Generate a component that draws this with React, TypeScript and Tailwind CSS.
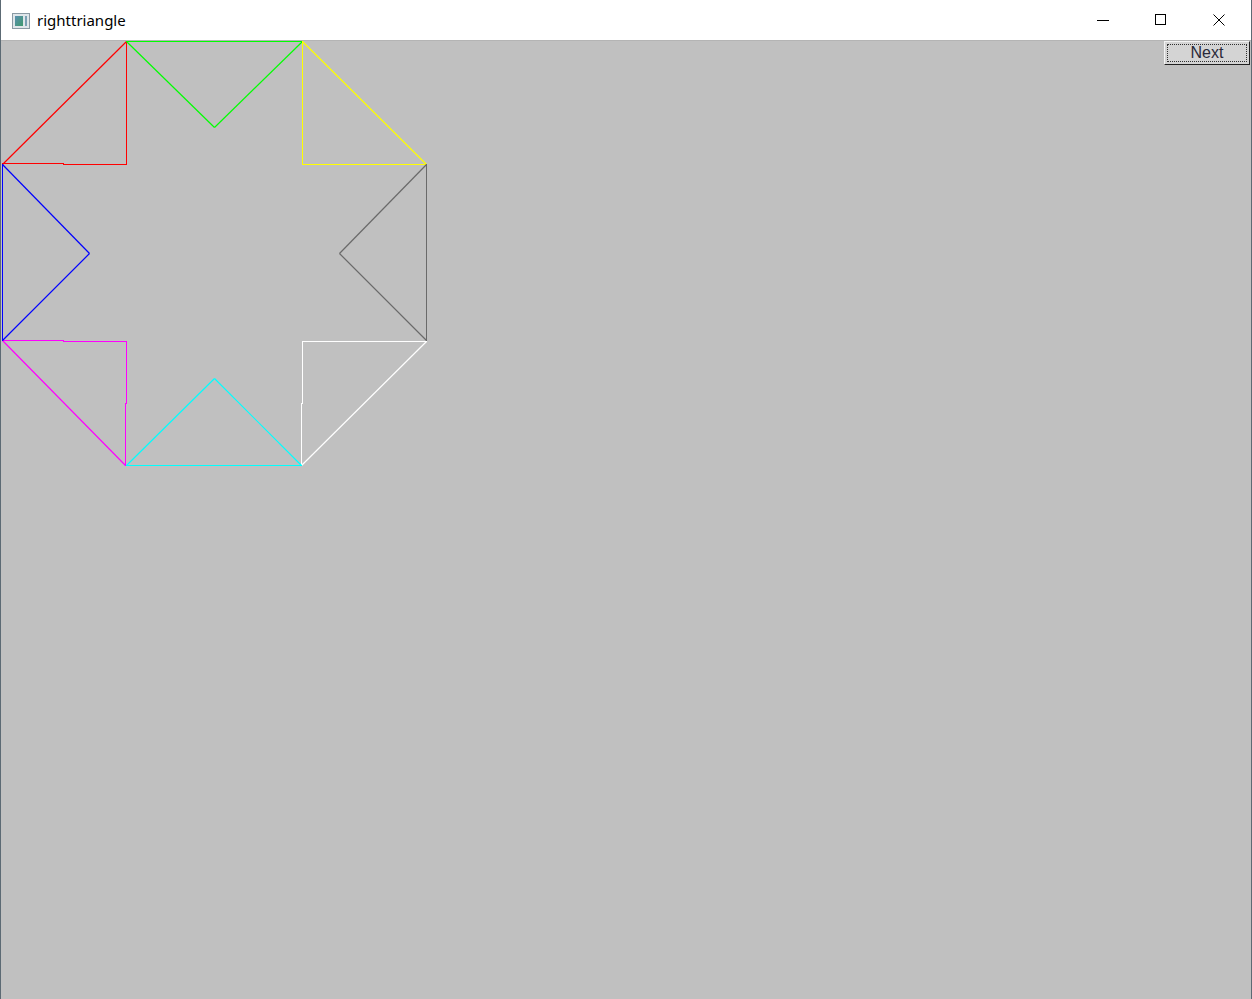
import React from 'react';

// the eight right triangles, page pixel coords: [x1, y1, x2, y2]
const shapes: { color: string; segs: number[][] }[] = [
  { color: '#ff0000', segs: [[126, 41, 2, 164], [126, 41, 126, 164], [2, 163, 63, 163], [63, 164, 126, 164]] },
  { color: '#00ff00', segs: [[126, 41, 302, 41], [126, 41, 214, 127], [214, 127, 302, 41]] },
  { color: '#ffff00', segs: [[302, 41, 302, 164], [302, 164, 426, 164], [302, 41, 426, 164]] },
  { color: '#6a6a6a', segs: [[426, 164, 426, 340], [426, 164, 339, 253], [339, 253, 426, 340]] },
  { color: '#ffffff', segs: [[302, 341, 426, 341], [302, 341, 302, 403], [301, 403, 301, 465], [426, 341, 301, 465]] },
  { color: '#00ffff', segs: [[126, 465, 301, 465], [126, 465, 214, 378], [214, 378, 301, 465]] },
  { color: '#ff00ff', segs: [[2, 340, 63, 340], [63, 341, 126, 341], [126, 341, 126, 403], [125, 403, 125, 465], [2, 340, 125, 465]] },
  { color: '#0000ff', segs: [[2, 164, 2, 340], [2, 164, 89, 253], [89, 253, 2, 340]] },
];

const Seg = ({ s, color }: { s: number[]; color: string }) => {
  const [x1, y1, x2, y2] = s;
  if (x1 === x2 || y1 === y2) {
    // straight runs as 1px rects so they stay sharp
    return (
      <rect
        x={Math.min(x1, x2)}
        y={Math.min(y1, y2)}
        width={Math.abs(x2 - x1) + 1}
        height={Math.abs(y2 - y1) + 1}
        fill={color}
      />
    );
  }
  return (
    <path d={`M${x1 + 0.5} ${y1 + 0.5} L${x2 + 0.5} ${y2 + 0.5}`} stroke={color} strokeWidth={1.2} fill="none" />
  );
};

const AppIcon = () => (
  <svg width="18" height="16" viewBox="0 0 18 16">
    <defs>
      <linearGradient id="ig" x1="0" y1="0" x2="1" y2="1">
        <stop offset="0" stopColor="#5a8fb0" />
        <stop offset="1" stopColor="#3f9a6e" />
      </linearGradient>
    </defs>
    <rect x="0.5" y="0.5" width="17" height="15" fill="#dfe6ea" stroke="#8a9aa4" />
    <rect x="3" y="3" width="8" height="10" fill="url(#ig)" />
    <rect x="13" y="3" width="2" height="10" fill="#7aa0b4" />
  </svg>
);

const TitleBar = () => (
  <div className="flex h-[41px] items-center border-b border-[#b4b4b4] bg-white">
    <div className="ml-[11px] mt-[1px] flex items-center">
      <AppIcon />
    </div>
    <span className="ml-[7px] text-[15px] text-black" style={{ fontFamily: '"Noto Sans", "Liberation Sans", sans-serif' }}>
      righttriangle
    </span>
    <div className="ml-auto flex h-full">
      <div className="flex h-full w-[58px] items-center justify-center">
        <svg width="12" height="12" viewBox="0 0 12 12">
          <path d="M0 6.5 H12" stroke="#000" strokeWidth="1" />
        </svg>
      </div>
      <div className="flex h-full w-[58px] items-center justify-center">
        <svg width="12" height="12" viewBox="0 0 12 12">
          <rect x="0.5" y="0.5" width="10" height="10" fill="none" stroke="#000" />
        </svg>
      </div>
      <div className="mr-[3px] flex h-full w-[58px] items-center justify-center">
        <svg width="12" height="12" viewBox="0 0 12 12">
          <path d="M0.5 0.5 L11.5 11.5 M11.5 0.5 L0.5 11.5" stroke="#000" strokeWidth="1" />
        </svg>
      </div>
    </div>
  </div>
);

export default function App() {
  return (
    <div className="flex h-[999px] w-[1252px] flex-col overflow-hidden border-x border-[#5c6a74] bg-[#c0c0c0]">
      <TitleBar />
      <div className="relative flex-1 bg-[#c0c0c0]">
        <svg width="1250" height="958" viewBox="1 41 1250 958" className="block">
          {shapes.map((sh) => sh.segs.map((s) => <Seg key={sh.color + s.join('-')} s={s} color={sh.color} />))}
        </svg>
        <button
          className="absolute right-[1px] top-0 h-[24px] w-[86px] border border-t-[#f4f4f4] border-l-[#f4f4f4] border-r-[#202020] border-b-[#202020] bg-[#d4d4d4] p-[2px]"
          style={{ fontFamily: '"Liberation Sans", Arial, sans-serif' }}
        >
          <div className="flex h-full w-full items-center justify-center border border-dotted border-[#303030] text-[16px] leading-none text-[#2a2a3a]">
            Next
          </div>
        </button>
      </div>
    </div>
  );
}
